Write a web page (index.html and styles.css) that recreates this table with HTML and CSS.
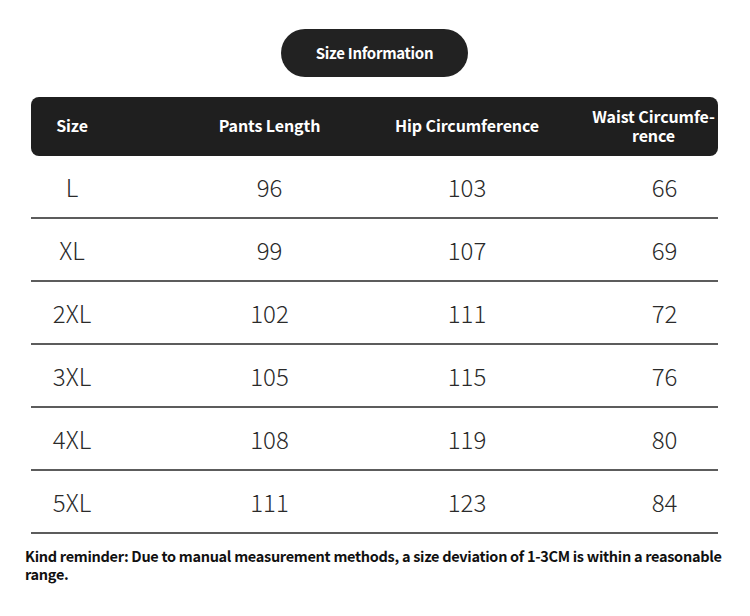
FILE: index.html
```html
<!DOCTYPE html>
<html lang="en">
<head>
<meta charset="utf-8">
<title>Size Information</title>
<link rel="stylesheet" href="styles.css">
</head>
<body>
<div class="page">
  <div class="pill">Size Information</div>
  <div class="table">
    <div class="head">
      <div class="cell"><span>Size</span></div>
      <div class="cell"><span>Pants Length</span></div>
      <div class="cell"><span>Hip Circumference</span></div>
      <div class="cell"><span class="two">Waist Circumfe-<br>rence</span></div>
    </div>
    <div class="row"><div class="cell">L</div><div class="cell">96</div><div class="cell">103</div><div class="cell">66</div></div>
    <div class="row"><div class="cell">XL</div><div class="cell">99</div><div class="cell">107</div><div class="cell">69</div></div>
    <div class="row"><div class="cell">2XL</div><div class="cell">102</div><div class="cell">111</div><div class="cell">72</div></div>
    <div class="row"><div class="cell">3XL</div><div class="cell">105</div><div class="cell">115</div><div class="cell">76</div></div>
    <div class="row"><div class="cell">4XL</div><div class="cell">108</div><div class="cell">119</div><div class="cell">80</div></div>
    <div class="row"><div class="cell">5XL</div><div class="cell">111</div><div class="cell">123</div><div class="cell">84</div></div>
  </div>
  <p class="note">Kind reminder: Due to manual measurement methods, a size deviation of 1-3CM is within a reasonable range.</p>
</div>
</body>
</html>
```
FILE: styles.css
```css
* { box-sizing: border-box; }
html, body { margin: 0; padding: 0; background: #ffffff; }
body {
  font-family: "Noto Sans CJK SC", "Noto Sans", sans-serif;
  color: #222;
}
.page {
  width: 750px;
  height: 616px;
  padding-top: 29px;
  display: flex;
  flex-direction: column;
  align-items: flex-start;
}
.pill {
  align-self: center;
  margin-left: -1px;
  width: 187px;
  height: 48px;
  border-radius: 24px;
  background: #222222;
  color: #fff;
  font-size: 15px;
  font-weight: 600;
  letter-spacing: -0.3px;
  display: flex;
  align-items: center;
  justify-content: center;
  padding-bottom: 2px;
}
.table {
  margin-top: 20px;
  margin-left: 31px;
  width: 687px;
}
.head {
  height: 59px;
  background: #1f1f1f;
  border-radius: 8px;
  display: flex;
  gap: 115.5px;
  align-items: center;
  padding-bottom: 4px;
  color: #fff;
  font-size: 16px;
  font-weight: 600;
  letter-spacing: -0.1px;
}
.head .cell span { white-space: nowrap; display: block; line-height: 20px; }
.head .cell span.two {
  text-align: center;
  line-height: 19px;
  margin-right: 22px;
  margin-top: 2px;
}
.row {
  height: 63px;
  border-bottom: 2px solid #5c5c5c;
  display: flex;
  gap: 115.5px;
  align-items: center;
  font-size: 24px;
  font-weight: 300;
  color: #2a2a2a;
}
.cell {
  width: 82px;
  flex: 0 0 82px;
  display: flex;
  justify-content: center;
  white-space: nowrap;
}
.row:first-of-type { height: 62px; }
.note {
  margin: 13px 0 0 25px;
  width: 705px;
  font-size: 14.5px;
  line-height: 18px;
  font-weight: 700;
  color: #111;
  letter-spacing: -0.3px;
}
```
